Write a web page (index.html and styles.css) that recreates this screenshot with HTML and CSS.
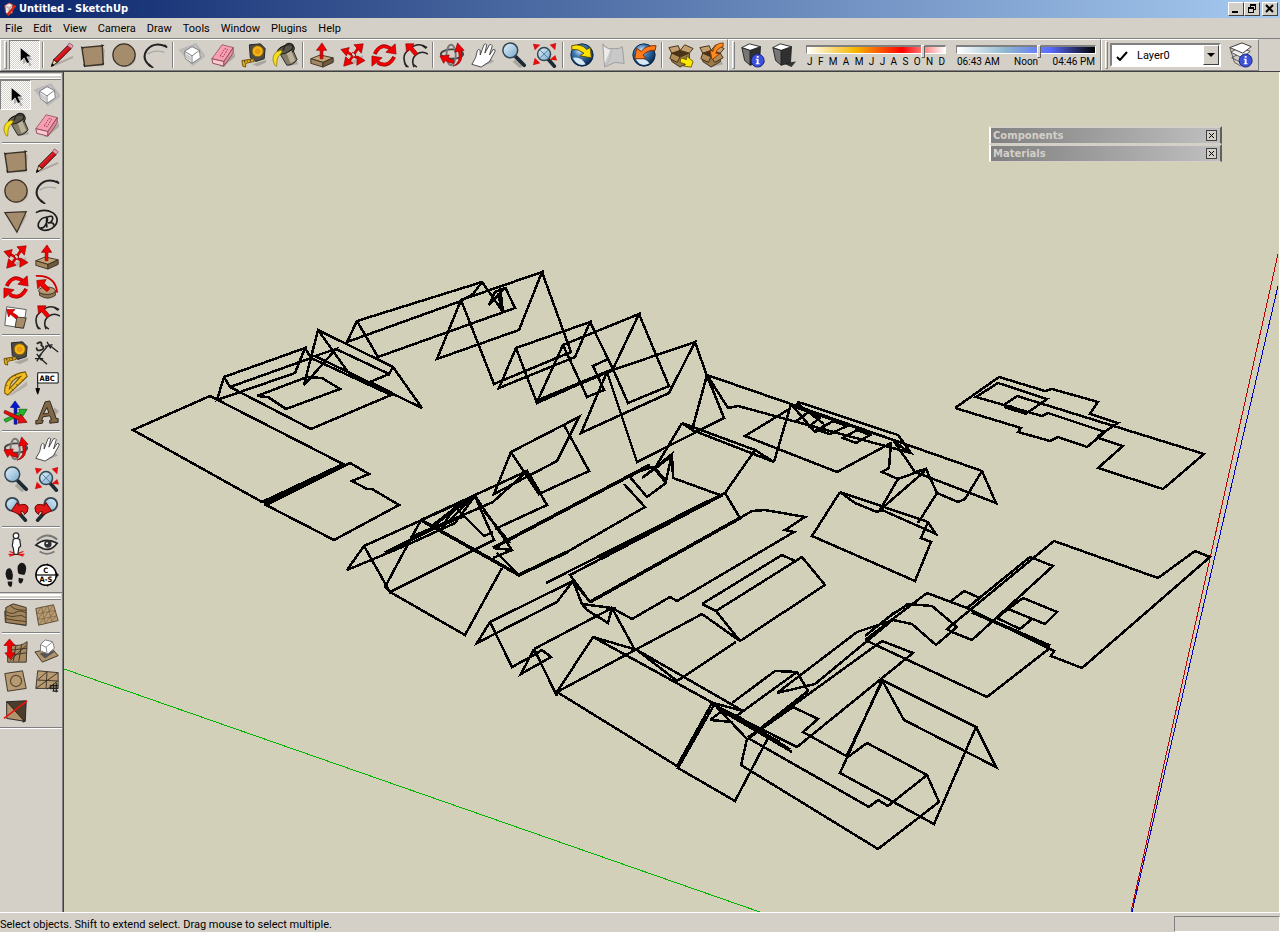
FILE: index.html
```html
<!DOCTYPE html>
<html lang="en">

  <head>
    <meta charset="UTF-8">
    <meta name="viewport" content="width=device-width, initial-scale=1.0">
    <title>Untitled - SketchUp</title>

    <link rel="stylesheet" href="styles.css">
  </head>

  <body>

    <!-- icon set, used by both toolbars -->
    <svg class="icon-set" aria-hidden="true">
      <defs>
        <radialGradient id="globe" cx="0.4" cy="0.3" r="0.7">
          <stop offset="0" stop-color="#d8ecfa" />
          <stop offset="0.4" stop-color="#3f79b0" />
          <stop offset="1" stop-color="#06264a" />
        </radialGradient>
        <linearGradient id="lens" x1="0" y1="0" x2="1" y2="1">
          <stop offset="0" stop-color="#e4f2fb" />
          <stop offset="1" stop-color="#78a8cc" />
        </linearGradient>
      </defs>

      <symbol id="i-select" viewBox="0 0 28 28">
        <path d="M12 9v15l4-4 3 6 2-1-3-6h4z" fill="#aaa" />
        <path d="M9 6v15l4-4 3 6 3-1-3-6h5z" fill="#000" stroke="#fff" stroke-width=".6" />
      </symbol>
      <symbol id="i-pencil" viewBox="0 0 28 28">
        <path d="M6 25L26 16" stroke="#aaa79f" stroke-width="2" />
        <path d="M3 26l2-7 4 3z" fill="#f0d49a" stroke="#000" stroke-width=".8" />
        <path d="M5 19L20 4l4 3-15 15z" fill="#d4121c" stroke="#000" stroke-width=".8" />
        <path d="M6 20L21 5" stroke="#f03030" />
        <path d="M20 4l2-3 4 3-2 3z" fill="#ef9db4" stroke="#7e4856" stroke-width=".8" />
        <path d="M2 27l1-4 3 2z" fill="#000" />
      </symbol>
      <symbol id="i-rect" viewBox="0 0 28 28">
        <path d="M5 26h20l2-18-3-2z" fill="#b5b1a8" />
        <path d="M2 6l22-2 1 20-20 2z" fill="#a58c6d" stroke="#3a3126" stroke-width="1.5" />
        <path d="M1 5l3 2M23 3l3 1M24 24l2-1M4 24l1 3" stroke="#222" />
      </symbol>
      <symbol id="i-circle" viewBox="0 0 28 28">
        <circle cx="16" cy="16" r="11" fill="#b5b1a8" />
        <circle cx="14" cy="14" r="12" fill="#a58c6d" stroke="#3a3126" stroke-width="1.3" />
      </symbol>
      <symbol id="i-arc" viewBox="0 0 28 28">
        <path d="M6 13Q13 8 24 11" fill="none" stroke="#aaa" stroke-width="1.5" />
        <path d="M9 26Q-1 18 5 9Q13-1 26 5" fill="none" stroke="#222" stroke-width="2.2" />
        <path d="M7 24l5 4M24 3l3 3" stroke="#222" stroke-width="2" />
      </symbol>
      <symbol id="i-component" viewBox="0 0 28 28">
        <path d="M2 9L18 3l9 12-12 9z" fill="none" stroke="#b9b9b9" stroke-width="3" />
        <path d="M6 10l8-5 8 4 1 8-9 6-7-5z" fill="#fff" stroke="#777" />
        <path d="M6 10l8 5 8-6M14 15v8" fill="none" stroke="#777" />
        <path d="M7 12l6 4v5l-6-4z" fill="#ccc" />
      </symbol>
      <symbol id="i-eraser" viewBox="0 0 28 28">
        <path d="M10 26l17-14v4L14 27z" fill="#a9a69f" />
        <path d="M2 18L13 3l12 3-10 15z" fill="#f7a0b4" stroke="#a2586a" />
        <path d="M2 18l13 3v5L3 23z" fill="#fbc7d1" stroke="#8a4a58" />
        <path d="M15 21L25 6v6L15 26z" fill="#e08ba0" stroke="#8a4a58" />
        <path d="M11 15l5-8 3 1-5 8z" fill="none" stroke="#a43c56" stroke-dasharray="2 1" />
      </symbol>
      <symbol id="i-tape" viewBox="0 0 28 28">
        <path d="M12 24l15-5v3l-9 4z" fill="#a9a69f" />
        <path d="M9 3l12-1 5 5-1 11-9 3-6-4z" fill="#4a4a48" stroke="#222" />
        <circle cx="18" cy="10" r="6" fill="#f5b417" stroke="#7d5900" />
        <circle cx="18" cy="10" r="3" fill="#e39a10" />
        <path d="M1 20l13-2v3l-9 2v4l-3-1z" fill="#e0a91e" stroke="#6c5000" />
        <path d="M4 20v2M7 20v1M10 19v2" stroke="#222" />
      </symbol>
      <symbol id="i-paint" viewBox="0 0 28 28">
        <path d="M16 26l12-2-3-7z" fill="#a9a69f" />
        <path d="M7 10l14-5 6 14q-4 6-11 6z" fill="#857d68" stroke="#222" />
        <path d="M15 10l5-2 5 12-5 3z" fill="#b9b298" />
        <ellipse cx="14" cy="8" rx="9" ry="4" fill="#5a5648" stroke="#111" transform="rotate(-22 14 8)" />
        <path d="M12 9Q14 0 21 2q5 4 1 9" fill="none" stroke="#222" stroke-width="1.5" />
        <path d="M9 9Q1 11 1 19q2 8 4 7 0-8 2-11 3-2 4-5z" fill="#f5df16" stroke="#8b7b00" stroke-width=".8" />
      </symbol>
      <symbol id="i-pushpull" viewBox="0 0 28 28">
        <path d="M16 27l12-7-3-2z" fill="#a9a69f" />
        <path d="M2 18l10-4 14 3-11 5z" fill="#c3a578" stroke="#3a3126" />
        <path d="M2 18v5l13 4v-5z" fill="#a4875f" stroke="#3a3126" />
        <path d="M15 22v5l11-5v-5z" fill="#705a3e" stroke="#3a3126" />
        <path d="M14 1l5 8h-4v9h-3V9H8z" fill="#f00000" stroke="#8c0000" stroke-width=".7" />
      </symbol>
      <symbol id="i-move" viewBox="0 0 28 28">
        <path d="M9 23l16-9v4l-10 6z" fill="#b5b1a8" />
        <path d="M6 10l16 9M20 6L9 22" stroke="#e00000" stroke-width="3" />
        <path d="M1 8l9-2-3 9zM15 3l10-1-2 10zM27 20l-9 5 1-10zM4 26l2-10 8 7z" fill="#f00000" stroke="#8c0000" stroke-width=".7" />
        <path d="M12 13l2-2 3 3-2 3z" fill="#d4d0c8" stroke="#8c0000" />
      </symbol>
      <symbol id="i-rotate" viewBox="0 0 28 28">
        <path d="M4 13Q10 0 21 7M25 16Q18 29 7 22" fill="none" stroke="#8c0000" stroke-width="4" />
        <path d="M4 12Q10 1 21 7M25 17Q18 28 7 22" fill="none" stroke="#f00000" stroke-width="3" />
        <path d="M26 2l1 11-11-2zM1 26l0-11 11 2z" fill="#f00000" stroke="#8c0000" stroke-width=".7" />
      </symbol>
      <symbol id="i-offset" viewBox="0 0 28 28">
        <path d="M5 27Q-2 14 8 8Q17-1 27 6M13 27Q9 18 16 13q6-4 12 0" fill="none" stroke="#222" stroke-width="1.7" />
        <path d="M22 4l4 3M3 24l4 3M12 24l4 3" stroke="#222" stroke-width="1.5" />
        <path d="M4 2l9 0-2 3 6 7-3 3-6-7-3 3z" fill="#f00000" stroke="#8c0000" stroke-width=".7" />
      </symbol>
      <symbol id="i-orbit" viewBox="0 0 28 28">
        <ellipse cx="14" cy="13" rx="12" ry="5" fill="none" stroke="#444" stroke-width="2" />
        <ellipse cx="13" cy="14" rx="5" ry="11" fill="none" stroke="#777" stroke-width="2" />
        <path d="M15 26q9-4 6-16l-4 1 3-10 7 8-3 1q3 14-9 16zM1 15l10-1-1 3q4 3 6 2l0 4q-5 0-9-3l-2 3z" fill="#f00000" stroke="#8c0000" stroke-width=".7" />
      </symbol>
      <symbol id="i-pan" viewBox="0 0 28 28">
        <path d="M12 27l14-6-4-3z" fill="#a9a69f" />
        <path d="M2 24l4-7 2-8q1-2 3 0l0 5 4-11q2-2 3 0l-2 9 5-9q2-1 3 1l-3 10 4-6q3 0 2 2l-6 11-9 6z" fill="#fff" stroke="#333" stroke-width=".9" />
      </symbol>
      <symbol id="i-zoom" viewBox="0 0 28 28">
        <path d="M14 20l8 7" stroke="#aaa79f" stroke-width="4" />
        <path d="M16 16l9 9" stroke="#1c2a34" stroke-width="4" stroke-linecap="round" />
        <circle cx="10" cy="9" r="8" fill="url(#lens)" stroke="#33454f" stroke-width="1.6" />
      </symbol>
      <symbol id="i-extents" viewBox="0 0 28 28">
        <path d="M17 18l7 8" stroke="#1c2a34" stroke-width="4" stroke-linecap="round" />
        <circle cx="13" cy="13" r="7" fill="url(#lens)" stroke="#33454f" stroke-width="1.6" />
        <path d="M9 9l8 8M17 9l-8 8" fill="none" stroke="#4f7d9c" />
        <path d="M1 2l8 1-6 6zM26 1l-1 8-6-6zM1 25l2-8 6 6zM27 20l-8-1 6-5z" fill="#e01010" />
      </symbol>
      <symbol id="i-get-view" viewBox="0 0 28 28">
        <circle cx="14" cy="14" r="12" fill="url(#globe)" stroke="#06264a" />
        <path d="M4 17q9-2 14 7-9 3-14-7z" fill="#d6e8f4" />
        <path d="M3 4Q13 1 19 8l4-2 1 11-12-2 4-3Q10 7 3 8z" fill="#ffe000" stroke="#554a00" />
      </symbol>
      <symbol id="i-terrain" viewBox="0 0 28 28">
        <path d="M3 2q5 6 9 5 9 1 12-2l2 18-10-1-11 5z" fill="#c9c9c9" stroke="#999" />
        <path d="M5 27Q13 18 12 7" fill="none" stroke="#b4b4b4" />
        <path d="M4 5l7 4-6 14z" fill="#ececec" />
      </symbol>
      <symbol id="i-place" viewBox="0 0 28 28">
        <circle cx="14" cy="14" r="12" fill="url(#globe)" stroke="#06264a" />
        <path d="M5 18q9-2 15 5-10 5-15-5z" fill="#d6e8f4" />
        <path d="M27 4Q17 3 11 10L6 7 4 18l12 0-3-4q6-6 13-5z" fill="#ff7a1c" stroke="#7a2c00" />
      </symbol>
      <symbol id="i-get-model" viewBox="0 0 28 28">
        <path d="M14 27l12-3-3-5z" fill="#a9a69f" />
        <path d="M4 12l9 4 10-4v9l-10 6-9-6z" fill="#9a774a" stroke="#3d2a10" />
        <path d="M4 12L1 6l10-2 2 5zM23 12l4-5-9-4-5 6z" fill="#c4a071" stroke="#3d2a10" />
        <path d="M4 12l9-3 10 3-10 4z" fill="#4a3314" />
        <path d="M4 12l9 4-3 6-8-4z" fill="#b08a58" stroke="#3d2a10" />
        <path d="M14 17l6 2 0-4 7 6-2 6-8-1 2-2-6-2z" fill="#ffe800" stroke="#6a5e00" />
      </symbol>
      <symbol id="i-share-model" viewBox="0 0 28 28">
        <path d="M14 27l12-3-3-5z" fill="#a9a69f" />
        <path d="M4 12l9 4 10-4v9l-10 6-9-6z" fill="#9a774a" stroke="#3d2a10" />
        <path d="M4 12L1 6l10-2 2 5zM23 12l4-5-9-4-5 6z" fill="#c4a071" stroke="#3d2a10" />
        <path d="M4 12l9-3 10 3-10 4z" fill="#4a3314" />
        <path d="M4 12l9 4-3 6-8-4zM23 12l-10 4 4 6 9-5z" fill="#b08a58" stroke="#3d2a10" />
        <path d="M26 1q-9 0-11 9l-3-1 2 10 8-6-4-1q2-6 8-7z" fill="#ff8a20" stroke="#8a3a00" />
      </symbol>
      <symbol id="i-cube" viewBox="0 0 28 28">
        <path d="M13 23l14-2-5 6z" fill="#333" />
        <path d="M2 6l9 3v16l-6-5z" fill="#777" stroke="#222" />
        <path d="M11 9l11-4-1 17-10 3z" fill="#303030" stroke="#222" />
        <path d="M2 6l8-4 12 3-11 4z" fill="#fff" stroke="#222" />
      </symbol>
      <symbol id="i-info" viewBox="0 0 28 28">
        <circle cx="19" cy="20" r="7" fill="#3c50dc" stroke="#1c2478" />
        <path d="M17 18h3v5h1v1h-4v-1h1v-4h-1zM18 15h2v2h-2z" fill="#fff" />
      </symbol>
      <symbol id="i-layers" viewBox="0 0 28 28">
        <path d="M4 17l9-5 12 4-9 7z" fill="#ccc" stroke="#555" />
        <path d="M3 11l9-5 12 4-9 7z" fill="#eee" stroke="#555" />
        <path d="M2 6l13-5 10 4-9 7z" fill="#fff" stroke="#333" />
        <path d="M2 6l5 16 7 4" fill="none" stroke="#555" />
      </symbol>
      <symbol id="i-poly" viewBox="0 0 28 28">
        <path d="M16 26L26 8l-4-2z" fill="#b5b1a8" />
        <path d="M2 5l23-1-10 22z" fill="#a58c6d" stroke="#3a3126" stroke-width="1.3" />
      </symbol>
      <symbol id="i-freehand" viewBox="0 0 28 28">
        <path d="M2 5q9-5 18 0 7 5 4 12-5 8-14 7-7-2-5-8 3-6 8-6 3 2 0 7-3 6-6 4M14 9q-1 8 0 12M14 10q7-3 6 2-1 4-5 4 7-1 6 3" fill="none" stroke="#1b1b1b" stroke-width="1.8" />
      </symbol>
      <symbol id="i-follow" viewBox="0 0 28 28">
        <path d="M6 19v4q9 6 17 0v-5" fill="#8f7553" stroke="#3a3126" />
        <ellipse cx="14" cy="18" rx="9" ry="4" fill="#b89a72" stroke="#3a3126" />
        <path d="M2 2q21-1 23 18" fill="none" stroke="#d00000" stroke-width="2" />
        <path d="M3 7l10-1-2 4 6 6-3 3-7-6-3 3z" fill="#f00000" stroke="#8c0000" stroke-width=".7" />
      </symbol>
      <symbol id="i-scale" viewBox="0 0 28 28">
        <path d="M4 3l21 3-3 20-20-3z" fill="#fff" stroke="#555" />
        <path d="M15 14l10 1-3 11-9-1z" fill="#a58c6d" stroke="#3a3126" />
        <path d="M4 6l9 0-3 3 6 4-2 3-6-5-2 3z" fill="#f00000" stroke="#8c0000" stroke-width=".7" />
      </symbol>
      <symbol id="i-dimension" viewBox="0 0 28 28">
        <path d="M5 18L16 5M16 5l10 8M5 18l9 8M1 20h9M3 15l5 7M12 7l8-2M14 2l4 7M3 23l5-8" stroke="#222" stroke-width="1.4" />
        <path d="M3 4q6-4 5 2 5 3-1 5-5 1-4-3" fill="none" stroke="#222" stroke-width="2" />
      </symbol>
      <symbol id="i-protractor" viewBox="0 0 28 28">
        <path d="M5 28L26 12v5L10 27z" fill="#b5b1a8" />
        <path d="M2 25Q0 6 24 2l2 5L5 27zM7 20Q8 10 19 7z" fill="#f1bd28" fill-rule="evenodd" stroke="#7d5900" stroke-width="1.2" />
        <path d="M3 16l2 1M6 10l2 2M13 5l1 2M20 10l2 2M14 15l2 2M9 20l2 2" stroke="#7d5900" />
      </symbol>
      <symbol id="i-axes" viewBox="0 0 28 28">
        <path d="M13 1l5 7h-3v18h-3V8H8z" fill="#0018e0" stroke="#000a60" stroke-width=".7" />
        <path d="M1 21l17-8-1-3 9 0-5 8-2-2L3 24z" fill="#20b828" stroke="#0a5a10" stroke-width=".7" />
        <path d="M2 11l16 7 1-3 7 9-10 1 1-3L1 14z" fill="#e01010" stroke="#700" stroke-width=".7" />
      </symbol>
      <symbol id="i-text3d" viewBox="0 0 28 28">
        <path d="M16 24l11-12-5-4z" fill="#a9a69f" />
        <path d="M12 2l5-1 7 19 2 0 0 4-9 1 0-3 2-1-2-4-7 1-2 4 2 0-1 3-7 1 0-4 2 0zM14 8l-4 7 6-1z" fill="#806747" fill-rule="evenodd" stroke="#2b2115" />
      </symbol>
      <symbol id="i-previous" viewBox="0 0 28 28">
        <path d="M17 18l7 8" stroke="#1c2a34" stroke-width="4" stroke-linecap="round" />
        <circle cx="10" cy="9" r="7" fill="url(#lens)" stroke="#33454f" stroke-width="2" />
        <path d="M9 16l6-9 2 3q9-3 10 3 0 5-4 7 0-4-4-3l1 4z" fill="#e01818" stroke="#600" />
      </symbol>
      <symbol id="i-walkman" viewBox="0 0 28 28">
        <path d="M7 21l15 5M22 21L7 26M6 24h17" stroke="#e01010" stroke-width="1.3" />
        <path d="M11 8q3-2 7 0l1 7-2 2-1 7h-4l-1-7-1-2z" fill="#fff" stroke="#222" stroke-width="1.3" />
        <circle cx="14" cy="4" r="3" fill="#fff" stroke="#222" stroke-width="1.3" />
      </symbol>
      <symbol id="i-look" viewBox="0 0 28 28">
        <path d="M3 9Q14-1 25 8M6 21q8 5 16 0" fill="none" stroke="#777" stroke-width="2" />
        <path d="M2 14q10-9 23-2-7 9-15 6z" fill="#eee" stroke="#222" stroke-width="1.8" />
        <circle cx="15" cy="13" r="4" fill="#333" />
        <circle cx="14" cy="12" r="1" fill="#fff" />
      </symbol>
      <symbol id="i-walk" viewBox="0 0 28 28">
        <path d="M3 11q1-5 5-4 4 4 2 12H5q-3-4-2-8zM5 21h5q0 6-2 6-3-1-3-6zM16 4q3-5 7-2 4 4 0 12l-6-1q-2-4-1-9zM17 17l5 1q-1 6-4 5-2-1-1-6z" fill="#181818" />
      </symbol>
      <symbol id="i-contours" viewBox="0 0 28 28">
        <path d="M1 10l10-6 13 4 1 18-23-4z" fill="#666" />
        <path d="M3 6l8-4 14 4v19L3 22z" fill="#a1845c" stroke="#3a3126" />
        <path d="M3 10q6 4 11 1t11 1M3 14q7 3 12 1t10 2M3 18q9 2 22 3M8 3q2 6 17 6" fill="none" stroke="#4b3a24" />
      </symbol>
      <symbol id="i-scratch" viewBox="0 0 28 28">
        <path d="M2 7l19-4 5 17L5 25z" fill="#b99c74" stroke="#5a4830" />
        <path d="M8 5l4 18M15 4l4 17M3 13l20-4M4 19l20-4M3 13l5-8M4 19L15 4M5 25L21 3M12 23l11-14M19 21l5-6" stroke="#7c6644" stroke-width=".8" fill="none" />
      </symbol>
      <symbol id="i-smoove" viewBox="0 0 28 28">
        <path d="M10 7q8 3 16-3l-1 22H5v-8z" fill="#a88a62" stroke="#3a3126" />
        <path d="M14 8l-3 17M20 7l-3 18M5 19l20-3M9 13l17-2M8 24L25 8" stroke="#3a3126" fill="none" />
        <path d="M7 1l6 7H9v8h4l-5 7-6-7h3V8H1z" fill="#f00000" stroke="#8c0000" stroke-width=".7" />
      </symbol>
      <symbol id="i-stamp" viewBox="0 0 28 28">
        <path d="M1 15l18-4 7 8-17 7z" fill="#b2946c" stroke="#3a3126" />
        <path d="M6 17l11-5 5 3-10 7z" fill="#555" />
        <path d="M7 7l5-5 8 2 2 7-7 6-8-3z" fill="#fff" stroke="#777" />
        <path d="M7 7l6 3 7-6M13 10l1 6" fill="none" stroke="#888" />
      </symbol>
      <symbol id="i-drape" viewBox="0 0 28 28">
        <path d="M2 6l19-3 4 19-20 3z" fill="#b89a72" stroke="#3a3126" />
        <circle cx="14" cy="14" r="6" fill="none" stroke="#5a4830" stroke-width="1.3" />
      </symbol>
      <symbol id="i-detail" viewBox="0 0 28 28">
        <path d="M4 3l22 2v17L2 22z" fill="#b99c74" stroke="#3a3126" />
        <path d="M14 4l-1 18M4 13l22 1M4 13L14 4M2 22l24-17M14 23l11-9" stroke="#3a3126" fill="none" />
        <path d="M17 19h9M18 22h8M20 25h6M18 18v5M21 17v8M24 16v10" stroke="#222" stroke-width="1.4" />
      </symbol>
      <symbol id="i-flip" viewBox="0 0 28 28">
        <path d="M4 4l21-1-1 22-2 1z" fill="#4c3c2b" stroke="#222" />
        <path d="M4 4l0 18 19 3z" fill="#b2946c" stroke="#222" />
        <path d="M1 22L26 3" stroke="#f01010" stroke-width="1.6" />
      </symbol>
    </svg>

    <header class="titlebar">
      <svg class="app-icon" viewBox="0 0 16 16" aria-hidden="true">
        <path d="M2 4l5-3 4 2 0 9-5 3-3-3z" fill="#e8e4e0" stroke="#a33" />
        <path d="M3 5l4 2 4-3M7 7v7" fill="none" stroke="#b88" />
        <path d="M5 15L14 4" stroke="#d22a18" stroke-width="3" />
      </svg>
      <h1>Untitled - SketchUp</h1>
      <div class="window-buttons">
        <button type="button" aria-label="Minimize"><svg viewBox="0 0 14 12"><path d="M3 8h6v2H3z" /></svg></button>
        <button type="button" aria-label="Restore"><svg viewBox="0 0 14 12"><path d="M5 1h6v6H9v3H3V4h2zM6 3v1h3v2h1V3zM4 6v3h4V6z" fill-rule="evenodd" /></svg></button>
        <button type="button" aria-label="Close" class="close"><svg viewBox="0 0 14 12"><path d="M3 2l7 7M10 2L3 9" stroke="#000" stroke-width="2" /></svg></button>
      </div>
    </header>

    <nav class="menubar">
      <button type="button">File</button>
      <button type="button">Edit</button>
      <button type="button">View</button>
      <button type="button">Camera</button>
      <button type="button">Draw</button>
      <button type="button">Tools</button>
      <button type="button">Window</button>
      <button type="button">Plugins</button>
      <button type="button">Help</button>
    </nav>

    <div class="toolbars">
      <div class="toolbar">
        <span class="grip"></span>
        <button type="button" class="tool active" aria-label="Select"><svg><use href="#i-select" /></svg></button>
        <span class="divider"></span>
        <button type="button" class="tool" aria-label="Line"><svg><use href="#i-pencil" /></svg></button>
        <button type="button" class="tool" aria-label="Rectangle"><svg><use href="#i-rect" /></svg></button>
        <button type="button" class="tool" aria-label="Circle"><svg><use href="#i-circle" /></svg></button>
        <button type="button" class="tool" aria-label="Arc"><svg><use href="#i-arc" /></svg></button>
        <span class="divider"></span>
        <button type="button" class="tool" aria-label="Make Component"><svg><use href="#i-component" /></svg></button>
        <button type="button" class="tool" aria-label="Eraser"><svg><use href="#i-eraser" /></svg></button>
        <button type="button" class="tool" aria-label="Tape Measure"><svg><use href="#i-tape" /></svg></button>
        <button type="button" class="tool" aria-label="Paint Bucket"><svg><use href="#i-paint" /></svg></button>
        <span class="divider"></span>
        <button type="button" class="tool" aria-label="Push/Pull"><svg><use href="#i-pushpull" /></svg></button>
        <button type="button" class="tool" aria-label="Move"><svg><use href="#i-move" /></svg></button>
        <button type="button" class="tool" aria-label="Rotate"><svg><use href="#i-rotate" /></svg></button>
        <button type="button" class="tool" aria-label="Offset"><svg><use href="#i-offset" /></svg></button>
        <span class="divider"></span>
        <button type="button" class="tool" aria-label="Orbit"><svg><use href="#i-orbit" /></svg></button>
        <button type="button" class="tool" aria-label="Pan"><svg><use href="#i-pan" /></svg></button>
        <button type="button" class="tool" aria-label="Zoom"><svg><use href="#i-zoom" /></svg></button>
        <button type="button" class="tool" aria-label="Zoom Extents"><svg><use href="#i-extents" /></svg></button>
        <span class="divider"></span>
        <button type="button" class="tool" aria-label="Get Current View"><svg><use href="#i-get-view" /></svg></button>
        <button type="button" class="tool" aria-label="Toggle Terrain"><svg><use href="#i-terrain" /></svg></button>
        <button type="button" class="tool" aria-label="Place Model"><svg><use href="#i-place" /></svg></button>
        <span class="divider"></span>
        <button type="button" class="tool" aria-label="Get Models"><svg><use href="#i-get-model" /></svg></button>
        <button type="button" class="tool" aria-label="Share Model"><svg><use href="#i-share-model" /></svg></button>
      </div>

      <div class="toolbar">
        <span class="grip"></span>
        <button type="button" class="tool" aria-label="Shadow Settings"><svg><use href="#i-cube" /><use href="#i-info" /></svg></button>
        <button type="button" class="tool" aria-label="Shadows"><svg><use href="#i-cube" /></svg></button>
        <div class="shadow-slider">
          <input type="range" class="months" aria-label="Month" min="0" max="100" value="85">
          <div class="ticks">
            <span>J</span><span>F</span><span>M</span><span>A</span><span>M</span><span>J</span><span>J</span><span>A</span><span>S</span><span>O</span><span>N</span><span>D</span>
          </div>
        </div>
        <div class="shadow-slider">
          <input type="range" class="hours" aria-label="Time of day" min="0" max="100" value="60">
          <div class="ticks">
            <span>06:43 AM</span><span>Noon</span><span>04:46 PM</span>
          </div>
        </div>
      </div>

      <div class="toolbar">
        <span class="grip"></span>
        <div class="layer-box">
          <svg class="check" viewBox="0 0 12 10" aria-hidden="true"><path d="M1 6l3 3 7-8" /></svg>
          <select aria-label="Layer">
            <option>Layer0</option>
          </select>
          <span class="drop"></span>
        </div>
        <button type="button" class="tool" aria-label="Layer Manager"><svg><use href="#i-layers" /><use href="#i-info" /></svg></button>
      </div>
    </div>

    <main class="workspace">
      <aside class="side">
        <div class="side-grip"></div>
        <div class="tool-grid">
          <button type="button" class="tool active" aria-label="Select"><svg><use href="#i-select" /></svg></button>
          <button type="button" class="tool" aria-label="Make Component"><svg><use href="#i-component" /></svg></button>
          <button type="button" class="tool" aria-label="Paint Bucket"><svg><use href="#i-paint" /></svg></button>
          <button type="button" class="tool" aria-label="Eraser"><svg><use href="#i-eraser" /></svg></button>
        </div>
        <div class="tool-grid">
          <button type="button" class="tool" aria-label="Rectangle"><svg><use href="#i-rect" /></svg></button>
          <button type="button" class="tool" aria-label="Line"><svg><use href="#i-pencil" /></svg></button>
          <button type="button" class="tool" aria-label="Circle"><svg><use href="#i-circle" /></svg></button>
          <button type="button" class="tool" aria-label="Arc"><svg><use href="#i-arc" /></svg></button>
          <button type="button" class="tool" aria-label="Polygon"><svg><use href="#i-poly" /></svg></button>
          <button type="button" class="tool" aria-label="Freehand"><svg><use href="#i-freehand" /></svg></button>
        </div>
        <div class="tool-grid">
          <button type="button" class="tool" aria-label="Move"><svg><use href="#i-move" /></svg></button>
          <button type="button" class="tool" aria-label="Push/Pull"><svg><use href="#i-pushpull" /></svg></button>
          <button type="button" class="tool" aria-label="Rotate"><svg><use href="#i-rotate" /></svg></button>
          <button type="button" class="tool" aria-label="Follow Me"><svg><use href="#i-follow" /></svg></button>
          <button type="button" class="tool" aria-label="Scale"><svg><use href="#i-scale" /></svg></button>
          <button type="button" class="tool" aria-label="Offset"><svg><use href="#i-offset" /></svg></button>
        </div>
        <div class="tool-grid">
          <button type="button" class="tool" aria-label="Tape Measure"><svg><use href="#i-tape" /></svg></button>
          <button type="button" class="tool" aria-label="Dimension"><svg><use href="#i-dimension" /></svg></button>
          <button type="button" class="tool" aria-label="Protractor"><svg><use href="#i-protractor" /></svg></button>
          <button type="button" class="tool" aria-label="Text">
            <svg viewBox="0 0 28 28">
              <path d="M4 6v18M2 20l2 6 2-6z" fill="#000" stroke="#000" />
              <path d="M4 3h22v11H4z" fill="#fff" stroke="#000" />
              <text x="6" y="12" class="icon-label">ABC</text>
            </svg>
          </button>
          <button type="button" class="tool" aria-label="Axes"><svg><use href="#i-axes" /></svg></button>
          <button type="button" class="tool" aria-label="3D Text"><svg><use href="#i-text3d" /></svg></button>
        </div>
        <div class="tool-grid">
          <button type="button" class="tool" aria-label="Orbit"><svg><use href="#i-orbit" /></svg></button>
          <button type="button" class="tool" aria-label="Pan"><svg><use href="#i-pan" /></svg></button>
          <button type="button" class="tool" aria-label="Zoom"><svg><use href="#i-zoom" /></svg></button>
          <button type="button" class="tool" aria-label="Zoom Extents"><svg><use href="#i-extents" /></svg></button>
          <button type="button" class="tool" aria-label="Previous"><svg><use href="#i-previous" /></svg></button>
          <button type="button" class="tool flip" aria-label="Next"><svg><use href="#i-previous" /></svg></button>
        </div>
        <div class="tool-grid">
          <button type="button" class="tool" aria-label="Position Camera"><svg><use href="#i-walkman" /></svg></button>
          <button type="button" class="tool" aria-label="Look Around"><svg><use href="#i-look" /></svg></button>
          <button type="button" class="tool" aria-label="Walk"><svg><use href="#i-walk" /></svg></button>
          <button type="button" class="tool" aria-label="Section Plane">
            <svg viewBox="0 0 28 28">
              <path d="M14 1l13 13-13 13z" fill="#222" />
              <circle cx="13" cy="14" r="11" fill="#fff" stroke="#000" stroke-width="1.5" />
              <path d="M2 14h23" stroke="#000" stroke-width="1.3" />
              <text x="10" y="12" class="icon-label">C</text>
              <text x="6" y="22" class="icon-label">A-S</text>
            </svg>
          </button>
        </div>
        <div class="side-grip sandbox-grip"></div>
        <div class="tool-grid">
          <button type="button" class="tool" aria-label="From Contours"><svg><use href="#i-contours" /></svg></button>
          <button type="button" class="tool" aria-label="From Scratch"><svg><use href="#i-scratch" /></svg></button>
        </div>
        <div class="tool-grid">
          <button type="button" class="tool" aria-label="Smoove"><svg><use href="#i-smoove" /></svg></button>
          <button type="button" class="tool" aria-label="Stamp"><svg><use href="#i-stamp" /></svg></button>
          <button type="button" class="tool" aria-label="Drape"><svg><use href="#i-drape" /></svg></button>
          <button type="button" class="tool" aria-label="Add Detail"><svg><use href="#i-detail" /></svg></button>
          <button type="button" class="tool" aria-label="Flip Edge"><svg><use href="#i-flip" /></svg></button>
        </div>
        <div class="side-end"></div>
      </aside>

      <section class="viewport">
        <svg class="model" viewBox="64 72 1215 840" preserveAspectRatio="xMinYMin slice" role="img" aria-label="Roof outlines">
          <g class="axes">
            <path d="M64 669L760 912" stroke="#00b400" />
            <path d="M1278 254L1131 912" stroke="#c00000" />
            <path d="M1278 286L1132 912" stroke="#0000c8" />
          </g>
          <g class="edges">
            <!-- west -->
            <path d="M133 430L210 396 343 464 262 502zM266 505L350 463 369 474 352 481 367 489 372 489 399 505 334 540zM264 503L345 465" />
            <path d="M217 400L224 377 305 348 295 373zM224 377L230 387 311 358 305 348M230 387L311 429 391 395 311 358" />
            <path d="M257 396L307 377 322 378 340 389 286 409 268 397z" />
            <path d="M318 330L304 385 336 349 315 356 422 408 393 367zM318 330L348 372M336 349L389 374 393 367M389 374L370 382 392 393" />
            <!-- north ridge -->
            <path d="M461 301L347 342 357 321 482 282 503 312M357 321L378 357 515 308 505 287M482 282L473 294 461 301" />
            <path d="M461 300L542 272 519 330 437 359zM461 300L494 384 571 352 542 272" />
            <path d="M489 305L495 292 505 288zM500 287L503 312M498 293L502 310" />
            <path d="M499 388L516 348 590 322 575 357zM516 348L537 403 613 369 590 322" />
            <path d="M538 400L563 345 639 314 613 369zM563 345L587 397 604 390 593 366 608 359 613 369 628 403 669 386 639 314M538 402L610 371" />
            <path d="M607 372L695 342 669 393 581 433zM607 372L637 462 724 418 707 376 695 342" />
            <path d="M579 417L511 452 494 494 557 461zM511 452L539 494 589 471 564 425" />
            <!-- north east -->
            <path d="M707 375L791 404 982 471 996 503 915 472M707 375L728 408 738 406 911 453 898 435 798 402 797 408 893 440M707 375L724 418M707 375L692 430 774 462 755 450 682 423 692 430M791 404L774 462M755 450L725 493" />
            <path d="M791 408L745 436 837 472 891 443M791 404L815 432 833 421M795 422L810 411 820 418 808 427M798 404L824 424M817 430L830 434 847 426 833 421zM843 438L856 443 870 435 857 430zM893 440L908 452" />
            <path d="M891 442L889 468 882 472 898 479 926 469 937 493 958 502 965 499 982 471M893 440L915 472 926 469M898 479L880 510 925 471M937 493L918 523" />
            <path d="M840 492L928 522 936 534 882 510 877 512 855 503zM840 492L812 536 915 581 931 542 921 538 928 522" />
            <!-- far east -->
            <path d="M955 408L999 377 1045 391 1052 389 1098 402 1090 414 1118 423 1097 437M955 408L1021 428 1018 432 1050 441 1058 437 1087 447 1105 432 1048 413 1042 416 976 397 998 383 1047 399 1027 413 1004 405 1017 396 1204 454 1163 489 1098 468 1123 446 1098 438 1105 431M1004 407L1027 414" />
            <!-- middle -->
            <path d="M347 570L364 546 475 496 494 540 390 592 364 546M347 570L407 545 455 523 475 496M421 520L527 471 547 505 495 529M527 471L493 502 463 515 411 537M527 471L539 494M421 520L385 587 390 592 465 635 502 568M475 496L512 550 493 558M497 553L519 575M455 507L484 536 493 532M484 511L510 543M430 528L473 497 440 530M460 501L445 522M529 474L541 494" />
            <path d="M567 552L645 507 624 484M493 548L512 550M630 477L647 497 666 483 653 467 637 472zM672 454L642 478 660 465M672 454L666 481 655 468zM682 423L655 468M672 454L673 478 720 495M546 583L700 505 725 493 740 518 590 602 570 575 721 496" />
            <path d="M573 581L490 622 477 643 557 602zM490 622L512 667 534 655M534 649L612 608 582 604 573 581 590 602M582 604L587 610 608 623 612 608 632 619 670 597 677 601 794 532 785 530 805 517 765 510 752 511 740 518M612 608L635 650M534 649L521 674 551 657 542 650 534 655M534 649L557 696" />
            <path d="M702 604L782 555 795 561M702 604L716 611 802 557 825 585 740 641 716 611M740 641L702 614 557 692 593 637 637 650M736 642L677 681 637 650 743 711 713 703 593 637" />
            <!-- south -->
            <path d="M557 692L677 766 712 703M714 705L678 768 735 801 768 738M710 720L733 722M710 720L722 711M714 705L797 747 913 653 882 641 748 738M713 703L747 739 741 765 878 849 939 802 927 775 867 743 848 757 803 732 818 719 793 707 748 738M722 711L792 752M732 716L780 742" />
            <path d="M732 703L775 671 797 672 808 691 748 738M797 672L735 717M777 693L857 632 893 620 912 624 936 645 957 627M777 693L815 684 895 618M748 738L869 807 878 800 888 806 927 775" />
            <path d="M882 680L840 773 934 824 976 727 882 680 904 720 996 767 976 727M882 682L846 757" />
            <path d="M886 619L908 604 932 606 957 627 952 632 947 629 1054 541 1158 578 1195 551 1210 557 1082 668 1051 656 1054 651 967 608 1030 557 1053 566 972 640 952 632M865 640L927 593 967 608M865 640L987 697 1050 648M865 636L895 612M950 602L964 591 980 598 967 608M1008 609L1023 598 1057 612 1045 624zM1032 619L1020 629 997 618 1008 609" />
          </g>
          <g class="edges heavy">
            <path d="M264 503L340 466M538 401L612 370M385 553L440 525M411 538L463 516M430 528L462 503M421 520L519 575 567 552M493 548L650 465M590 602L740 518M600 559L722 495M655 468L672 455M748 738L792 707M735 715L790 750M972 612L1050 646M1008 406L1027 413" />
          </g>
        </svg>

        <div class="trays">
          <div class="tray">
            <h2>Components</h2>
            <button type="button" aria-label="Close Components"><svg viewBox="0 0 9 9"><path d="M2 2l5 5M7 2L2 7" /></svg></button>
          </div>
          <div class="tray">
            <h2>Materials</h2>
            <button type="button" aria-label="Close Materials"><svg viewBox="0 0 9 9"><path d="M2 2l5 5M7 2L2 7" /></svg></button>
          </div>
        </div>
      </section>
    </main>

    <footer class="statusbar">
      <p>Select objects. Shift to extend select. Drag mouse to select multiple.</p>
      <input type="text" class="vcb" aria-label="Measurements">
    </footer>

  </body>

</html>
```
FILE: styles.css
```css
*,
*::before,
*::after {
  margin: 0;
  padding: 0;
  box-sizing: border-box;
}

body {
  height: 100vh;
  display: flex;
  flex-direction: column;
  background-color: #d4d0c8;
  color: #000;
  font-family: Roboto, "Liberation Sans", sans-serif;
  font-size: 11px;
  overflow: hidden;
}

button,
input,
select {
  font: inherit;
  color: inherit;
}

.icon-set {
  position: absolute;
  width: 0;
  height: 0;
}

.icon-label {
  font-family: "DejaVu Sans Condensed", sans-serif;
  font-size: 8px;
  font-weight: bold;
}

/* title bar */

.titlebar {
  display: flex;
  align-items: center;
  height: 18px;
  padding: 0 2px 0 3px;
  gap: 2px;
  background: linear-gradient(to right, #0a246a, #a6caf0);
  color: #fff;

  & h1 {
    flex: 1;
    font-family: "DejaVu Sans Condensed", "DejaVu Sans", sans-serif;
    font-size: 11px;
    line-height: 18px;
    font-weight: bold;
  }
}

.app-icon {
  width: 14px;
  height: 14px;
}

.window-buttons {
  display: flex;

  & button {
    width: 16px;
    height: 14px;
    border: 1px solid;
    border-color: #fff #404040 #404040 #fff;
    background-color: #d4d0c8;
  }

  & .close {
    margin-left: 2px;
  }

  & svg {
    display: block;
    width: 14px;
    height: 12px;
  }
}

/* menu */

.menubar {
  display: flex;
  height: 20px;
  padding-top: 1px;

  & button {
    border: none;
    background: none;
    padding: 0 6px 0 5px;
    line-height: 19px;
  }

  & button:hover {
    background-color: #0a246a;
    color: #fff;
  }
}

/* top toolbars */

.toolbars {
  display: flex;
  border-top: 1px solid #808080;
  border-bottom: 1px solid #404040;
}

.toolbar {
  display: flex;
  align-items: center;
  height: 32px;
  border: 1px solid;
  border-color: #fff #808080 #808080 #fff;
}

.grip {
  width: 3px;
  height: 28px;
  margin: 0 2px 0 3px;
  border: 1px solid;
  border-color: #fff #808080 #808080 #fff;
}

.divider {
  width: 2px;
  height: 26px;
  margin: 0 2px;
  border-left: 1px solid #808080;
  border-right: 1px solid #fff;
}

.tool {
  display: grid;
  place-items: center;
  width: 31px;
  height: 30px;
  border: none;
  background: none;

  & svg {
    width: 26px;
    height: 26px;
  }
}

.tool.active {
  border: 1px solid;
  border-color: #808080 #fff #fff #808080;
  background: repeating-conic-gradient(#fff 0 25%, #d4d0c8 0 50%) 0 0 / 2px 2px;
}

.tool.flip svg {
  transform: scaleX(-1);
}

.shadow-slider {
  width: 140px;
  margin: 0 4px 0 7px;

  & input {
    display: block;
    appearance: none;
    width: 100%;
    height: 12px;
    background: none;
  }

  & input::-webkit-slider-runnable-track {
    height: 9px;
    border: 1px solid;
    border-width: 2px 1px 1px;
    border-color: #808080 #fff #fff #808080;
  }

  & .months::-webkit-slider-runnable-track {
    background: linear-gradient(to right, #fff, #f5b800 35%, #f00 69%, #fff);
  }

  & .hours::-webkit-slider-runnable-track {
    background: linear-gradient(to right, #fff, #8fb8d0 35%, #5a6cff 67%, #000);
  }

  & input::-webkit-slider-thumb {
    appearance: none;
    width: 4px;
    height: 13px;
    margin-top: -2px;
    border: 1px solid;
    border-color: #fff #606060 #606060 #fff;
    background-color: #d4d0c8;
  }
}

.shadow-slider + .shadow-slider {
  margin-left: 6px;
}

.ticks {
  display: flex;
  justify-content: space-between;
  padding: 0 1px;
  font-size: 10px;
  line-height: 11px;
}

.layer-box {
  position: relative;
  width: 111px;
  height: 24px;

  & select {
    appearance: none;
    width: 100%;
    height: 100%;
    padding-left: 25px;
    border: 2px solid;
    border-color: #808080 #fff #fff #808080;
    border-radius: 0;
    background-color: #fff;
  }

  & .check {
    position: absolute;
    left: 6px;
    top: 8px;
    width: 12px;
    height: 10px;
    fill: none;
    stroke: #000;
    stroke-width: 2;
  }

  & .drop {
    position: absolute;
    top: 2px;
    right: 2px;
    bottom: 2px;
    width: 16px;
    border: 1px solid;
    border-color: #fff #404040 #404040 #fff;
    background-color: #d4d0c8;
    pointer-events: none;
  }

  & .drop::after {
    content: "";
    position: absolute;
    left: 3px;
    top: 7px;
    border: 4px solid transparent;
    border-top-color: #000;
    border-bottom: none;
  }
}

.layer-box + .tool {
  margin: 0 2px 0 4px;
}

/* left toolbar and drawing area */

.workspace {
  flex: 1;
  min-height: 0;
  display: flex;
}

.side {
  flex: none;
  width: 64px;
  border-right: 1px solid #404040;
  box-shadow: inset -1px 0 #808080;
}

.side-grip {
  height: 8px;
  border-top: 1px solid #808080;
  padding-top: 1px;
}

.side-grip::after {
  content: "";
  display: block;
  height: 5px;
  width: 61px;
  border: solid #fff;
  border-width: 2px 0 1px;
  box-shadow: 0 1px #808080;
}

.sandbox-grip {
  margin-top: 2px;
}

.tool-grid {
  display: grid;
  grid-template-columns: 31px 31px;
}

.tool-grid + .tool-grid::before {
  content: "";
  grid-column: 1 / -1;
  height: 2px;
  margin: 2px;
  border-top: 1px solid #808080;
  border-bottom: 1px solid #fff;
}

.side-end {
  width: 62px;
  height: 2px;
  margin-top: 1px;
  border-top: 1px solid #808080;
  border-bottom: 1px solid #fff;
}

.viewport {
  flex: 1;
  position: relative;
  border-right: 1px solid #fff;
  background-color: #d2d0b9;
  overflow: hidden;
}

.model {
  display: block;
  width: 100%;
  height: 100%;
  shape-rendering: crispEdges;
}

.axes path {
  fill: none;
  stroke-width: 1;
}

.edges {
  fill: none;
  stroke: #000;
  stroke-width: 2.5;
}

.heavy {
  stroke-width: 3.5;
}

.trays {
  position: absolute;
  top: 54px;
  right: 57px;
  width: 233px;
}

.tray {
  display: flex;
  align-items: center;
  height: 18px;
  padding: 0 3px 0 2px;
  border: 1px solid;
  border-color: #d4d0c8 #606060 #d4d0c8 #fff;
  border-width: 2px 2px 1px;
  background: linear-gradient(to right, #808080, #c0c0c0);
  color: #d4d0c8;

  & h2 {
    flex: 1;
    font-family: "DejaVu Sans", sans-serif;
    font-size: 10px;
    line-height: 14px;
  }

  & button {
    width: 11px;
    height: 11px;
    border: 1px solid #404040;
    background-color: #d4d0c8;
  }

  & svg {
    display: block;
    width: 9px;
    height: 9px;
    stroke: #000;
  }
}

/* status bar */

.statusbar {
  display: flex;
  align-items: flex-end;
  justify-content: space-between;
  height: 20px;
  border-top: 1px solid #fff;

  & p {
    line-height: 14px;
  }

  & .vcb {
    width: 106px;
    height: 16px;
    border: 1px solid;
    border-color: #808080 #fff #fff #808080;
    background-color: #d4d0c8;
  }
}
```
